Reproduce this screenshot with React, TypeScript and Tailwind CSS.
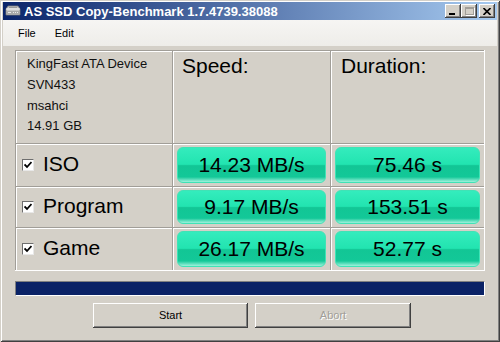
import React from "react";

const rows = [
  { name: "ISO", speed: "14.23 MB/s", time: "75.46 s", h: "h-[43px]" },
  { name: "Program", speed: "9.17 MB/s", time: "153.51 s", h: "h-[41px]" },
  { name: "Game", speed: "26.17 MB/s", time: "52.77 s", h: "h-[43px]" },
];

const cell =
  "border-t border-l border-t-[#a19e98] border-l-[#a19e98] shadow-[inset_1px_1px_0_#ffffff]";

const CheckBox = () => (
  <div className="w-[12px] h-[12px] bg-white border border-t-[#6e6e6e] border-l-[#6e6e6e] border-b-[#e8e8e8] border-r-[#e8e8e8] flex items-center justify-center">
    <svg width="8" height="8" viewBox="0 0 8 8">
      <path d="M0.5 3.5 L3 6 L7.5 1" stroke="#000" strokeWidth="1.8" fill="none" />
    </svg>
  </div>
);

const GreenBox = ({ text }: { text: string }) => (
  <div className="flex-1 h-full rounded-[6px] border border-[#3fe3b6] bg-[linear-gradient(to_bottom,#34ecbd_0%,#22e4b0_48%,#12c695_52%,#13c898_85%,#9ff2dc_100%)] flex items-center justify-center text-[21px] text-black">
    {text}
  </div>
);

const WinButton = ({ children }: { children: React.ReactNode }) => (
  <div className="w-[16px] h-[14px] bg-[#d4d0c8] shadow-[inset_-1px_-1px_#404040,inset_1px_1px_#ffffff,inset_-2px_-2px_#808080] flex items-center justify-center">
    {children}
  </div>
);

const ClassicButton = ({ label, disabled }: { label: string; disabled?: boolean }) => (
  <div
    className={
      "h-[25px] bg-[#d4d0c8] shadow-[inset_-1px_-1px_#404040,inset_1px_1px_#ffffff,inset_-2px_-2px_#808080] flex items-center justify-center text-[11px] " +
      (disabled ? "text-[#a19e98] [text-shadow:1px_1px_0_#ffffff]" : "text-black")
    }
  >
    {label}
  </div>
);

export default function App() {
  return (
    <div className="w-[500px] h-[342px] bg-[#d4d0c8] pt-[2px] px-[3px] flex flex-col font-['Liberation_Sans',Arial,sans-serif] shadow-[inset_1px_1px_#d4d0c8,inset_-1px_-1px_#404040,inset_2px_2px_#ffffff,inset_-2px_-2px_#808080] overflow-hidden">
      {/* title bar */}
      <div className="h-[18px] flex items-center bg-[linear-gradient(to_right,#0a246a,#a6caf0)] pl-[2px] pr-[2px]">
        <svg width="16" height="16" viewBox="0 0 16 16" className="shrink-0">
          <path d="M3 3 L13 3 L15 6 L15 12 L1 12 L1 6 Z" fill="#c9c9c9" stroke="#7a7a7a" strokeWidth="0.8" />
          <path d="M1 6 L15 6" stroke="#f2f2f2" strokeWidth="1" />
          <path d="M4 4.5 h8" stroke="#9a9a9a" strokeWidth="1" />
          <rect x="2" y="8" width="12" height="3" fill="#aaaaaa" />
          <path d="M3 9.5 h3 M8 9.5 h1 M10 9.5 h1 M12 9.5 h1" stroke="#ececec" strokeWidth="1" />
        </svg>
        <span className="ml-[3px] text-white font-bold text-[13px] leading-none whitespace-nowrap">
          AS SSD Copy-Benchmark 1.7.4739.38088
        </span>
        <div className="ml-auto flex items-center">
          <WinButton>
            <div className="w-[6px] h-[2px] bg-black mt-[6px] -ml-[2px]" />
          </WinButton>
          <WinButton>
            <div className="w-[9px] h-[8px] border border-[#a19e98] border-t-2 shadow-[1px_1px_0_#ffffff]" />
          </WinButton>
          <div className="w-[2px]" />
          <WinButton>
            <svg width="8" height="7" viewBox="0 0 8 7">
              <path d="M0.5 0 L7.5 7 M7.5 0 L0.5 7" stroke="#000" strokeWidth="1.6" />
            </svg>
          </WinButton>
        </div>
      </div>

      {/* menu */}
      <div className="h-[26px] bg-[linear-gradient(to_bottom,#f6f5f3,#eeede9)] flex items-center text-[11px] text-black">
        <span className="ml-[15px]">File</span>
        <span className="ml-[19px]">Edit</span>
      </div>

      {/* body */}
      <div className="flex-1 pt-[4px] pl-[12px] flex flex-col">
        <div className="w-[470px] border-r border-b border-r-white border-b-white">
          {/* header */}
          <div className="flex h-[93px]">
            <div className={cell + " w-[157px] pl-[11px] pt-[2px] text-[13px] leading-[21px] text-[#111]"}>
              <div>KingFast ATA Device</div>
              <div>SVN433</div>
              <div>msahci</div>
              <div className="-mt-[1px]">14.91 GB</div>
            </div>
            <div className={cell + " w-[158px] pl-[9px] pt-[3px] text-[21px] leading-[24px] text-black"}>Speed:</div>
            <div className={cell + " flex-1 pl-[10px] pt-[3px] text-[21px] leading-[24px] text-black"}>Duration:</div>
          </div>
          {rows.map((r) => (
            <div key={r.name} className={"flex " + r.h}>
              <div className={cell + " w-[157px] pl-[6px] flex items-center gap-[9px] text-[21px] text-black"}>
                <CheckBox />
                <span className="-mt-[3px]">{r.name}</span>
              </div>
              <div className={cell + " w-[158px] px-[4px] pt-[3px] pb-[3px] flex"}>
                <GreenBox text={r.speed} />
              </div>
              <div className={cell + " flex-1 px-[4px] pt-[3px] pb-[3px] flex"}>
                <GreenBox text={r.time} />
              </div>
            </div>
          ))}
        </div>

        {/* progress */}
        <div className="mt-[10px] w-[470px] h-[15px] bg-[#0a2266] border border-t-[#808080] border-l-[#808080] border-b-white border-r-white" />

        {/* buttons */}
        <div className="mt-[7px] flex pl-[78px] gap-[7px]">
          <div className="w-[155px]">
            <ClassicButton label="Start" />
          </div>
          <div className="w-[156px]">
            <ClassicButton label="Abort" disabled />
          </div>
        </div>
      </div>
    </div>
  );
}
